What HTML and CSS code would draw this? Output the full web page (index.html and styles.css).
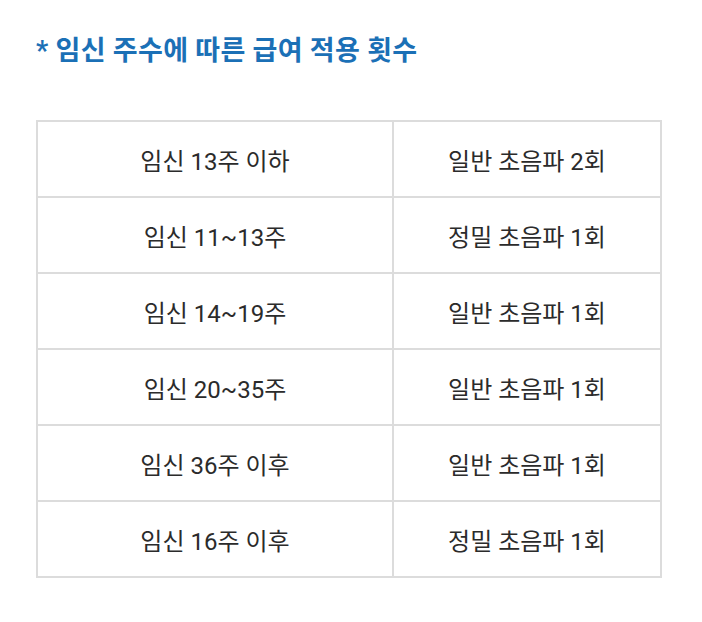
FILE: index.html
```html
<!DOCTYPE html>
<html lang="ko">
<head>
<meta charset="utf-8">
<link rel="stylesheet" href="styles.css">
</head>
<body>
<div class="page">
  <h2 class="title">* 임신 주수에 따른 급여 적용 횟수</h2>
  <table class="tbl">
    <tr><td class="c1">임신 13주 이하</td><td class="c2">일반 초음파 2회</td></tr>
    <tr><td class="c1">임신 11~13주</td><td class="c2">정밀 초음파 1회</td></tr>
    <tr><td class="c1">임신 14~19주</td><td class="c2">일반 초음파 1회</td></tr>
    <tr><td class="c1">임신 20~35주</td><td class="c2">일반 초음파 1회</td></tr>
    <tr><td class="c1">임신 36주 이후</td><td class="c2">일반 초음파 1회</td></tr>
    <tr><td class="c1">임신 16주 이후</td><td class="c2">정밀 초음파 1회</td></tr>
  </table>
</div>
</body>
</html>
```
FILE: styles.css
```css
html, body {
  margin: 0;
  padding: 0;
  background: #ffffff;
}
.page {
  padding: 33px 40px 0 36px;
  font-family: Roboto, "Noto Sans CJK KR", "Noto Sans", sans-serif;
}
.title {
  margin: 0;
  font-size: 27px;
  font-weight: 700;
  color: #1b70b6;
  line-height: 36px;
  letter-spacing: 0.3px;
}
.tbl {
  margin-top: 51px;
  width: 626px;
  border-collapse: collapse;
  border: 2px solid #dcdcdc;
}
.tbl td {
  border: 2px solid #dcdcdc;
  height: 74px;
  padding: 0;
  text-align: center;
  font-size: 24px;
  color: #2b2b2b;
}
.c1 { width: 354px; }
```
